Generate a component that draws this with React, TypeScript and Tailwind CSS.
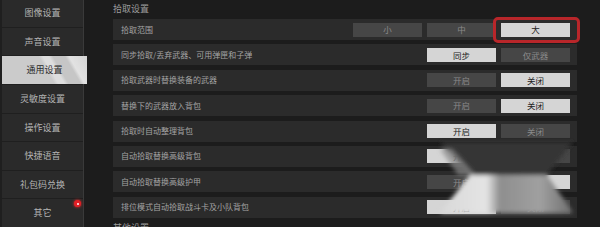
import React from "react";

const font = { fontFamily: '"Noto Sans CJK SC", "Noto Sans", sans-serif' };

const navItems = ["图像设置", "声音设置", "通用设置", "灵敏度设置", "操作设置", "快捷语音", "礼包码兑换", "其它"];

type Row = { label: string; options: string[]; active: number };

const rows: Row[] = [
  { label: "拾取范围", options: ["小", "中", "大"], active: 2 },
  { label: "同步拾取/丢弃武器、可用弹匣和子弹", options: ["同步", "仅武器"], active: 0 },
  { label: "拾取武器时替换装备的武器", options: ["开启", "关闭"], active: 1 },
  { label: "替换下的武器放入背包", options: ["开启", "关闭"], active: 1 },
  { label: "拾取时自动整理背包", options: ["开启", "关闭"], active: 0 },
  { label: "自动拾取替换高级背包", options: ["开启", "关闭"], active: 0 },
  { label: "自动拾取替换高级护甲", options: ["开启", "关闭"], active: 1 },
  { label: "排位模式自动拾取战斗卡及小队背包", options: ["开启", "关闭"], active: 0 },
];

const SettingRow = ({ row, first }: { row: Row; first: boolean }) => (
  <div className="relative flex items-center h-[21px] bg-[#2b2b2b] pl-2 pr-[7px]">
    <span className="flex-1 text-[8px] text-[#a3a3a3] leading-none">{row.label}</span>
    <div className="flex gap-[5px]">
      {row.options.map((o, i) => (
        <div
          key={o}
          className={
            i === row.active
              ? "w-[69px] h-[14px] flex items-center justify-center bg-[#d5d5d5] text-[#222] text-[8.5px] leading-none"
              : "w-[69px] h-[14px] flex items-center justify-center bg-[#464646] text-[#8a8a8a] text-[8.5px] leading-none"
          }
        >
          {o}
        </div>
      ))}
    </div>
    {first && (
      <div className="absolute left-[380px] -top-[2px] w-[87px] h-[26px] border-[3px] border-[#b8262a] rounded-[5px]" />
    )}
  </div>
);

export default function App() {
  return (
    <div className="w-[600px] h-[227px] overflow-hidden flex bg-[#1c1c1c] relative" style={font}>
      {/* Sidebar */}
      <div className="w-[84px] shrink-0 border-r border-[#3a3a3a] bg-[#1f1f1f] flex flex-col gap-px -mt-px pl-[2px]">
        {navItems.map((n) =>
          n === "通用设置" ? (
            <div
              key={n}
              className="relative z-10 h-[28px] -mr-[4px] flex items-center justify-center text-[9px] text-[#2a2a2a] bg-[linear-gradient(60deg,#cbcbcb_0%,#cbcbcb_52%,#dedede_56%,#dedede_62%,#c6c6c6_66%,#c6c6c6_78%,#e2e2e2_82%,#d4d4d4_100%)]"
            >
              {n}
            </div>
          ) : (
            <div
              key={n}
              className="relative h-[28px] flex items-center justify-center text-[9px] text-[#b4b4b4] bg-[#2a2a2a]"
            >
              {n}
              {n === "其它" && (
                <span className="absolute right-[2px] top-[1px] w-[7px] h-[7px] rounded-full bg-[#e21f26] flex items-center justify-center shadow-[0_0_3px_#ff2a2a]">
                  <span className="w-[2px] h-[2px] rounded-full bg-white" />
                </span>
              )}
            </div>
          )
        )}
      </div>

      {/* Main */}
      <div className="flex-1 pl-[29px] pr-[23px] pt-[2px]">
        <div className="text-[9px] text-[#9d9d9d] h-[17px] leading-[13px]">拾取设置</div>
        <div className="flex flex-col gap-[4.4px]">
          {rows.map((r, i) => (
            <SettingRow key={r.label} row={r} first={i === 0} />
          ))}
        </div>
        <div className="text-[9px] text-[#9d9d9d] mt-[3px] leading-[13px]">其他设置</div>
      </div>

      {/* blurred watermark */}
      <svg className="absolute left-0 top-0 pointer-events-none" width="600" height="227">
        <defs>
          <filter id="b" x="-20%" y="-20%" width="140%" height="140%">
            <feGaussianBlur stdDeviation="2" />
          </filter>
          <linearGradient id="g" x1="0" x2="1" y1="0" y2="0">
            <stop offset="0" stopColor="#d9d9d9" />
            <stop offset="0.35" stopColor="#e4e4e4" />
            <stop offset="0.45" stopColor="#8e8e8e" />
            <stop offset="0.75" stopColor="#a0a0a0" />
            <stop offset="1" stopColor="#6e6e6e" />
          </linearGradient>
        </defs>
        <g filter="url(#b)">
          <polygon points="440,142 573,142 547,175 470,175" fill="#363636" />
          <polygon points="440,149 452,149 475,175 458,175" fill="#8a8a8a" opacity="0.7" />
          <polygon points="470,175 547,175 573,213 440,213" fill="url(#g)" />
        </g>
      </svg>
    </div>
  );
}
